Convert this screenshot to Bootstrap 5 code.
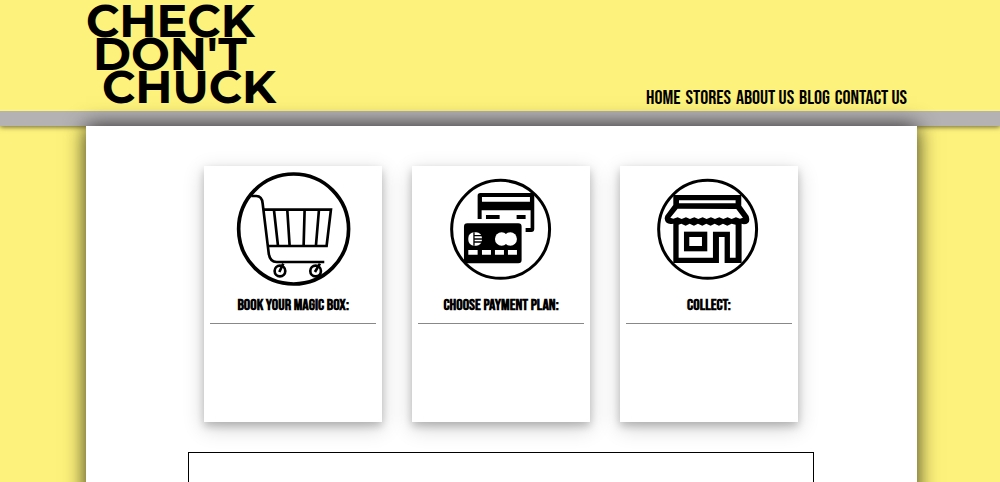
<!DOCTYPE html>
<html lang="en">
<head>
<meta charset="utf-8">
<meta name="viewport" content="width=device-width, initial-scale=1">
<title>Check Don't Chuck</title>
<link href="https://cdn.jsdelivr.net/npm/bootstrap@5.3.0/dist/css/bootstrap.min.css" rel="stylesheet">
<style>
body{background:#fdf27b;color:#000;font-family:"Bebas Neue","Liberation Sans Narrow","Liberation Sans",sans-serif}
.site-header{border-bottom:15px solid #b5b2b4;box-shadow:0 1px 5px rgba(0,0,0,.6)}
.gutters{margin-left:8.6%;margin-right:8.3%}
.header-inner{height:111px}
.brand{font:700 46px/33px Montserrat,Inter,sans-serif;color:#000;padding-top:4px}
.brand span{display:block}
.brand .line-b{padding-left:7px}
.brand .line-c{padding-left:16px}
.menu{font-size:20px;line-height:24px;padding:0 10px 1px 0;gap:5px}
.menu a{color:#000}
.sheet{box-shadow:0 0 20px rgba(0,0,0,.8);padding-top:40px;min-height:calc(100vh - 126px)}
.inner{width:75.3%;margin-left:12.3%}
.steps{--bs-gutter-x:30px}
.step{height:256px;box-shadow:0 4px 8px 0 rgba(0,0,0,.2),0 6px 20px 0 rgba(0,0,0,.19)}
.step svg{height:120px}
.step h2{font-size:16px;line-height:20px;font-weight:700;margin:10px 0 7px;white-space:nowrap}
.step hr{margin:0 6px;opacity:1;border-top:1px solid #888}
.panel{margin-top:30px;height:220px;border:1px solid #000}
</style>
</head>
<body>
<header class="site-header">
  <div class="gutters header-inner d-flex justify-content-between">
    <a href="#" class="brand text-decoration-none"><span>CHECK</span><span class="line-b">DON'T</span><span class="line-c">CHUCK</span></a>
    <nav class="menu d-flex align-self-end">
      <a class="text-decoration-none" href="#">HOME</a>
      <a class="text-decoration-none" href="#">STORES</a>
      <a class="text-decoration-none" href="#">ABOUT US</a>
      <a class="text-decoration-none" href="#">BLOG</a>
      <a class="text-decoration-none" href="#">CONTACT US</a>
    </nav>
  </div>
</header>
<main class="sheet gutters bg-white">
  <div class="inner">
    <div class="px-3">
      <div class="row steps">
        <div class="col-4">
          <section class="step bg-white text-center">
            <svg class="d-block w-100" viewBox="42 33 534 360" fill="none" stroke="#000" stroke-width="8" aria-hidden="true">
              <circle cx="311" cy="222" r="165" stroke-width="11"/>
              <path d="M184 123h15q17 0 19 22l18 148q3 28 24 28h143" stroke-width="8"/>
              <path d="M220 164h203l-13 109H234M252 165l12 107M292 165l7 107M344 165l-3 107M387 165l-9 107"/>
              <circle cx="270" cy="348" r="16"/><circle cx="377" cy="348" r="16"/>
              <path d="M268 351l12-25M375 351l15-25"/>
            </svg>
            <h2>BOOK YOUR MAGIC BOX:</h2>
            <hr>
          </section>
        </div>
        <div class="col-4">
          <section class="step bg-white text-center">
            <svg class="d-block w-100" viewBox="36 33 534 360" aria-hidden="true">
              <circle cx="302" cy="223" r="147" fill="none" stroke="#000" stroke-width="9"/>
              <path d="M233 192v-70q0-8 8-8h154q8 0 8 8v100q0 9-9 9h-17v-12h15v-53H245v26zM246 126v14h144v-14z" fill-rule="evenodd"/>
              <path d="M258 180h41v12h-41zM350 180h27v12h-27z"/>
              <rect x="192" y="205" width="173" height="120" rx="10"/>
              <g fill="#fff"><rect x="205" y="232" width="41" height="40" rx="17"/><circle cx="305" cy="252" r="20"/><circle cx="331" cy="252" r="20"/>
              <path d="M205 285h28v14h-28zM246 285h27v14h-27zM285 285h27v14h-27zM324 285h27v14h-27z"/></g>
              <path d="M222 232v40M224 242h23M224 252h23M224 261h23" fill="none" stroke="#000" stroke-width="4"/>
            </svg>
            <h2>CHOOSE PAYMENT PLAN:</h2>
            <hr>
          </section>
        </div>
        <div class="col-4">
          <section class="step bg-white text-center">
            <svg class="d-block w-100" viewBox="30 33 534 360" aria-hidden="true">
              <circle cx="293" cy="223" r="147" fill="none" stroke="#000" stroke-width="9"/>
              <path d="M190 120h204v32l22 31q8 25-14 25l-7-2v118h-51v-78h-17v78H190V206q-24 5-26-16l2-8 24-32zM207 136v9h170v-9zM203 161l-22 27 9 3 13-4 12 5 13-5 12 5 13-5 12 5 13-5 12 5 13-5 12 5 13-5 12 5 13-5 12 5 13-5 12 4 9-3-20-26zM206 209v99h103v-78h51v78h17v-99l-12-3-13 6-13-6-12 6-13-6-12 6-13-6-12 6-13-6-12 6-13-6-12 6-13-6z" fill-rule="evenodd"/>
              <rect x="230" y="238" width="54" height="43" fill="#fff" stroke="#000" stroke-width="16"/>
            </svg>
            <h2>COLLECT:</h2>
            <hr>
          </section>
        </div>
      </div>
    </div>
    <section class="panel"></section>
  </div>
</main>
<script src="https://cdn.jsdelivr.net/npm/bootstrap@5.3.0/dist/js/bootstrap.bundle.min.js"></script>
</body>
</html>
